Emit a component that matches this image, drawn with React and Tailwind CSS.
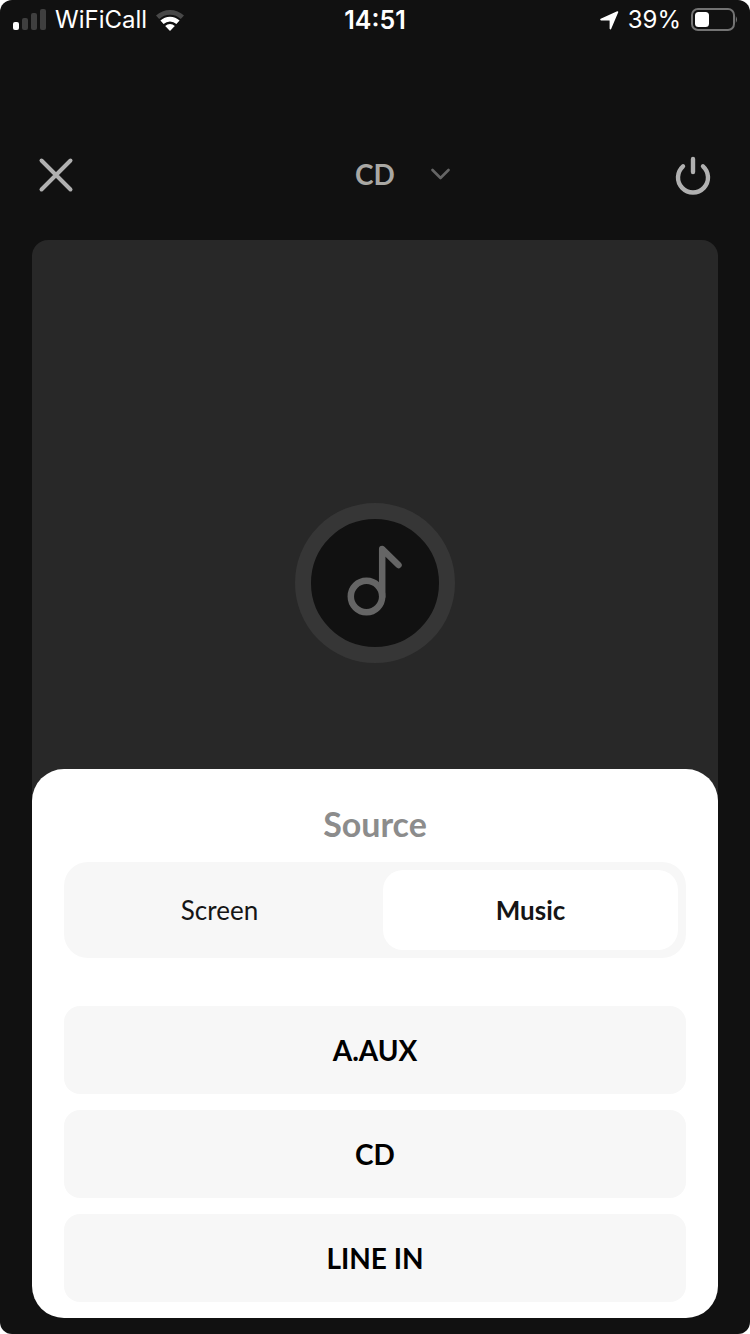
import { useState } from 'react'

const tabs = ['Screen', 'Music']

const sources = {
  Screen: [],
  Music: ['A.AUX', 'CD', 'LINE IN'],
}

// Status bar: signal, carrier, wifi, clock, location, battery
function StatusBar() {
  return (
    <div className="grid h-10 grid-cols-[1fr_auto_1fr] items-center px-3 font-['Inter',sans-serif] text-2xl leading-10">
      <div className="flex items-center gap-2">
        <svg width="35" height="24" viewBox="0 0 35 24">
          <rect x="1" y="14" width="6" height="8" rx="2" fill="#fff" />
          <rect x="10" y="10" width="6" height="12" rx="2" fill="#3f3f3f" />
          <rect x="19" y="5" width="6" height="17" rx="2" fill="#3f3f3f" />
          <rect x="28" y="1" width="6" height="21" rx="2" fill="#3f3f3f" />
        </svg>
        <span>WiFiCall</span>
        <svg width="30" height="24" viewBox="0 0 30 24">
          <path d="M1 7.6A20.5 20.5 0 0 1 29 7.6L25.8 10.9A15.8 15.8 0 0 0 4.2 10.9Z" fill="#484848" />
          <path d="M5.4 12.6A13.8 13.8 0 0 1 24.6 12.6L21.4 16A9.4 9.4 0 0 0 8.6 16Z" fill="#fff" />
          <path d="M10.2 17.9A7 7 0 0 1 19.8 17.9L15 23Z" fill="#fff" />
        </svg>
      </div>
      <span className="text-[25px] font-semibold">14:51</span>
      <div className="flex items-center justify-end gap-2">
        <svg width="22" height="22" viewBox="0 0 22 22">
          <path
            d="M19.5 3L12.4 19.6V11.4L11.6 10.6H3L19.5 3Z"
            fill="#fff"
            stroke="#fff"
            strokeWidth="1.6"
            strokeLinejoin="round"
          />
        </svg>
        <span>39%</span>
        <svg width="49" height="24" viewBox="0 0 49 24">
          <rect x="3" y="1" width="42" height="21" rx="6" fill="none" stroke="#737373" strokeWidth="2" />
          <rect x="6" y="4" width="14" height="15" rx="3.5" fill="#fff" />
          <path d="M46.8 8Q49.2 11.5 46.8 15Z" fill="#737373" />
        </svg>
      </div>
    </div>
  )
}

export default function App() {
  const [tab, setTab] = useState('Music')
  const [source, setSource] = useState('CD')

  return (
    <div className="min-h-screen bg-white">
      <main className="relative min-h-screen overflow-hidden rounded-xl bg-[#111] font-['Lato',sans-serif] text-white">
        <StatusBar />

        {/* Header */}
        <header className="mx-8 mt-28 grid h-12 grid-cols-[1fr_auto_1fr] items-center">
          <button aria-label="Close" className="size-12">
            <svg width="48" height="48" viewBox="0 0 48 48" fill="none" stroke="#b0b0b0" strokeWidth="4" strokeLinecap="round">
              <path d="M9.5 8.5L38.5 37.5M38.5 8.5L9.5 37.5" />
            </svg>
          </button>
          <button className="flex items-center gap-9 pb-1 pl-14 text-[28px] leading-10 font-bold text-[#a9a8a4]">
            {source}
            <svg width="20" height="20" viewBox="0 0 20 20" fill="none" stroke="#656565" strokeWidth="2.6" strokeLinecap="round" strokeLinejoin="round">
              <path d="M1.5 6L9.5 14L17.5 6" />
            </svg>
          </button>
          <button aria-label="Power" className="size-12 justify-self-end">
            <svg width="48" height="48" viewBox="0 0 48 48" fill="none" stroke="#b0b0b0" strokeWidth="4.4" strokeLinecap="round">
              <path d="M13 14.3A15 15 0 1 0 33 14.3" />
              <path d="M23 7V20" />
            </svg>
          </button>
        </header>

        {/* Artwork */}
        <section className="mx-8 mt-10 flex aspect-square items-center justify-center rounded-2xl bg-[#282828]">
          <div className="flex size-40 items-center justify-center rounded-full border-16 border-[#363636] bg-[#111]">
            <svg width="128" height="128" viewBox="0 0 128 128" fill="none" stroke="#656565" strokeWidth="6.5" strokeLinecap="round" strokeLinejoin="round">
              <circle cx="55.5" cy="77.5" r="15.7" />
              <path d="M71.2 77.5V30L87.5 46" />
            </svg>
          </div>
        </section>

        {/* Source sheet */}
        <section className="absolute inset-x-8 bottom-4 rounded-4xl bg-white px-8 pt-[37px] pb-4 text-black">
          <h2 className="text-center text-[34px] leading-9 font-bold text-[#8c8c8c]">Source</h2>
          <div role="tablist" className="mt-5 grid grid-cols-2 gap-4 rounded-3xl bg-[#f7f7f7] p-2">
            {tabs.map(t => (
              <button
                key={t}
                role="tab"
                aria-selected={tab === t}
                onClick={() => setTab(t)}
                className={`h-20 rounded-[20px] text-[26px] text-[#151515] ${
                  tab === t ? 'bg-white font-bold' : 'font-normal'
                }`}
              >
                {t}
              </button>
            ))}
          </div>
          <div className="mt-12 flex flex-col gap-4">
            {sources[tab].map(s => (
              <button
                key={s}
                onClick={() => setSource(s)}
                className="h-22 rounded-2xl bg-[#f7f7f7] text-[28px] font-bold"
              >
                {s}
              </button>
            ))}
          </div>
        </section>
      </main>
    </div>
  )
}
